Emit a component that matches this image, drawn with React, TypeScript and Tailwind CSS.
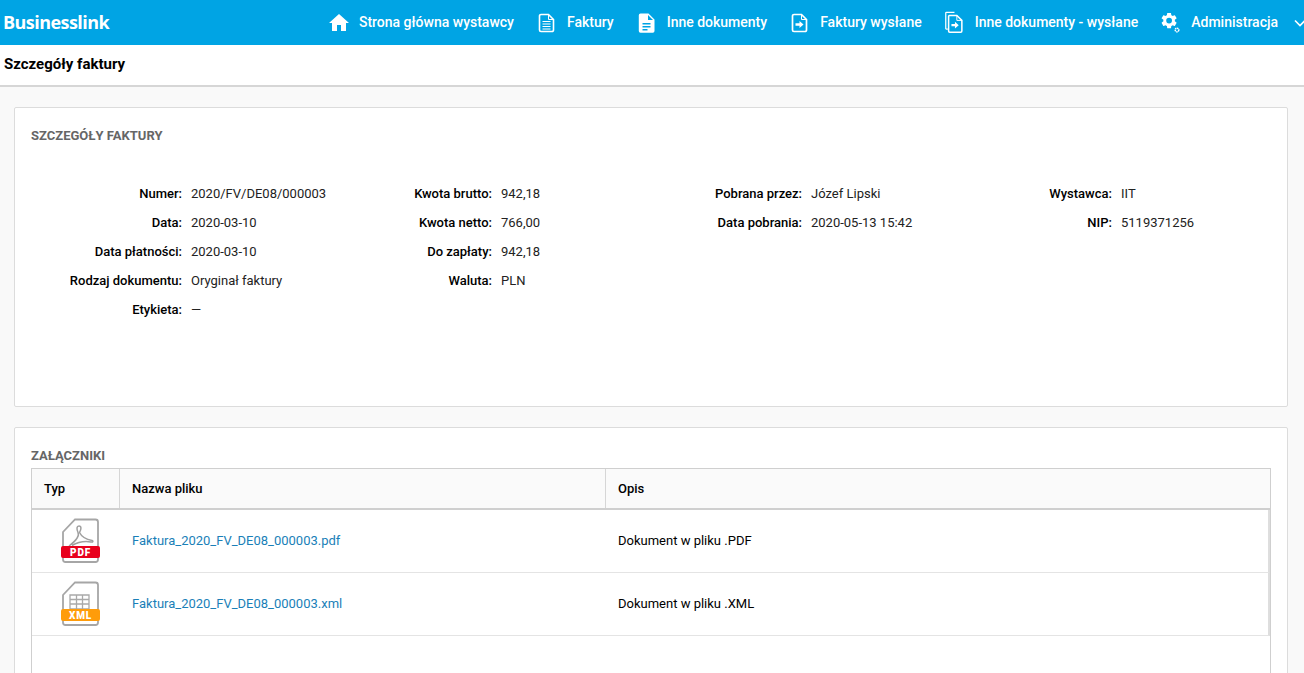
import React from "react";

const Home = () => (
  <svg width="24" height="24" viewBox="0 0 24 24" fill="#fff" className="w-[24px] h-[24px] -mx-[2px]"><path d="M10 20v-6h4v6h5v-8h3L12 3 2 12h3v8z" /></svg>
);
const DocLines = () => (
  <svg width="17" height="20" viewBox="0 0 17 20" fill="none" stroke="#fff">
    <path d="M1.500 3a1.500 1.500 0 0 1 1.500-1.500H10.500L15.500 6.500V17a1.500 1.500 0 0 1-1.500 1.500H3A1.500 1.500 0 0 1 1.500 17z" strokeWidth="1.600" />
    <path d="M10.500 1.500V6.500H15.500" strokeWidth="1" />
    <path d="M4.500 8.500H12.500M4.500 11H12.500M4.500 13.500H12.500M4.500 16H12.500" strokeWidth="1" />
  </svg>
);
const DocFilled = () => (
  <svg width="17" height="20" viewBox="0 0 17 20" fill="#fff">
    <path fillRule="evenodd" d="M2.500 0.500H10.500L16.500 6.500V18a1.700 1.700 0 0 1-1.700 1.700H2.500A1.700 1.700 0 0 1 .8 18V2.200A1.700 1.700 0 0 1 2.500.5zM10 2V7H15zM4.500 10V11.500H12.500V10zM4.500 13V14.500H12.500V13zM4.500 16V17.500H9.500V16z" />
  </svg>
);
const DocArrow = () => (
  <svg width="17" height="20" viewBox="0 0 17 20" fill="none">
    <path d="M1.500 3a1.500 1.500 0 0 1 1.500-1.500H10.500L15.500 6.500V17a1.500 1.500 0 0 1-1.500 1.500H3A1.500 1.500 0 0 1 1.500 17z" stroke="#fff" strokeWidth="1.700" />
    <path d="M10.500 1.500V6.500H15.500" stroke="#fff" strokeWidth="1" />
    <path d="M4.500 10.300H8.500V8L12.500 11.500L8.500 15V12.700H4.500z" fill="#fff" />
  </svg>
);
const DocsArrow = () => (
  <svg width="18" height="23" viewBox="0 0 19 23" fill="none">
    <path d="M3 18.500H1.500A.7.7 0 0 1 .8 17.800V1.500A.7.7 0 0 1 1.500.8H10" stroke="#fff" strokeWidth="1.300" />
    <path d="M3.800 5a1 1 0 0 1 1-1H12.500L17.800 9.300V20.500a1.200 1.200 0 0 1-1.200 1.200H5a1.200 1.200 0 0 1-1.200-1.200z" stroke="#fff" strokeWidth="1.600" />
    <path d="M12.500 4V9.300H17.800" stroke="#fff" strokeWidth="1" />
    <path d="M6.800 13H10.500V10.800L14.500 14.300L10.500 17.800V15.500H6.800z" fill="#fff" />
  </svg>
);
const Gears = () => (
  <svg width="19" height="20" viewBox="0 0 19 20" fill="#fff">
    <g transform="translate(-1.500 -2) scale(.8)">
      <path d="M19.140 12.940c.04-.3.060-.61.060-.94 0-.32-.02-.64-.07-.94l2.030-1.580a.49.49 0 0 0 .12-.61l-1.920-3.320a.49.49 0 0 0-.59-.22l-2.390.96c-.5-.38-1.030-.7-1.620-.94l-.36-2.540a.48.48 0 0 0-.48-.41h-3.840a.47.47 0 0 0-.47.41l-.36 2.540c-.59.240-1.130.570-1.620.94l-2.390-.96a.48.48 0 0 0-.59.22L2.740 8.870a.47.47 0 0 0 .12.610l2.030 1.580c-.05.3-.09.63-.09.94s.02.64.07.94l-2.030 1.580a.49.49 0 0 0-.12.610l1.920 3.320c.12.22.370.290.59.22l2.390-.96c.5.380 1.030.7 1.620.94l.36 2.540c.05.240.24.410.48.410h3.840c.24 0 .44-.17.470-.41l.36-2.540c.59-.24 1.130-.56 1.620-.94l2.390.96c.22.080.47 0 .59-.22l1.920-3.320a.47.47 0 0 0-.12-.61zM12 15.600a3.600 3.600 0 1 1 0-7.200 3.600 3.600 0 0 1 0 7.200z" />
    </g>
    <circle cx="16" cy="17" r="1.800" fill="none" stroke="#fff" strokeWidth="1.500" strokeDasharray="1.400 .5" />
  </svg>
);

const NavItem = ({ icon, label, gap }: { icon: React.ReactNode; label: string; gap: string }) => (
  <div className={`flex items-center ${gap}`}>
    {icon}
    <span className="text-[14px] font-medium text-white whitespace-nowrap">{label}</span>
  </div>
);

const Row = ({ label, value }: { label: string; value: string }) => (
  <div className="flex h-[29px] items-center text-[13px] leading-[29px]">
    <span className="w-[151px] shrink-0 text-right font-medium text-black">{label}</span>
    <span className="ml-[9px] text-[#222]">{value}</span>
  </div>
);

const Column = ({ rows }: { rows: [string, string][] }) => (
  <div>
    {rows.map(([l, v]) => (
      <Row key={l} label={l} value={v} />
    ))}
  </div>
);

const FileIcon = ({ color, label, kind }: { color: string; label: string; kind: "pdf" | "xml" }) => (
  <svg width="40" height="46" viewBox="0 0 40 46" fill="none">
    <path d="M2 14L14 1.500H34.500A2.500 2.500 0 0 1 37 4V41.500A2.500 2.500 0 0 1 34.500 44H4.500A2.500 2.500 0 0 1 2 41.500z" stroke="#a6a6a6" strokeWidth="1.800" fill="#fff" />
    {kind === "pdf" ? (
      <path d="M18 8c-2.500 0-2.500 3-1 6.500c2 4-3 9-9 13.500M18 8c2.500 0 2.500 3 .5 6.500c2 4 7 7 12.500 8c1.500 .5 1 2-1 1.500c-6-1-13 0-19 3.500" stroke="#a0a0a0" strokeWidth="1.500" />
    ) : (
      <path d="M9 14H28V28H9zM9 18.500H28M9 23H28M15.500 14V28M21.500 14V28" stroke="#a9a9a9" strokeWidth="1.300" />
    )}
    <rect x="0" y="28" width="39" height="12" rx="2" fill={color} />
    <text x="19.500" y="37.700" textAnchor="middle" fill="#fff" fontFamily="Roboto, sans-serif" fontWeight="900" fontSize="10" letterSpacing=".8">{label}</text>
  </svg>
);

const FileRow = ({ name, desc, color, label, kind }: { name: string; desc: string; color: string; label: string; kind: "pdf" | "xml" }) => (
  <div className="flex h-[63px] border-b border-b-[#e4e4e4] border-r-2 border-r-[#dedede] text-[13px]">
    <div className="w-[88px] shrink-0 flex items-center pl-[29px]">
      <FileIcon color={color} label={label} kind={kind} />
    </div>
    <div className="w-[486px] shrink-0 flex items-center pl-[12px] text-[#1a7fb8]">{name}</div>
    <div className="flex-1 flex items-center pl-[12px] text-black">{desc}</div>
  </div>
);

export default function App() {
  return (
    <div className="h-screen overflow-hidden bg-[#f9f9f9] font-['Roboto',sans-serif]">
      <header className="flex h-[45px] items-center bg-[#00a4e4] pl-[3px]">
        <span className="font-['Open_Sans',sans-serif] text-[18px] font-bold tracking-[-0.55px] text-white">Businesslink</span>
        <nav className="ml-auto flex items-center gap-[24px] -mr-[4px]">
          <NavItem icon={<Home />} label="Strona główna wystawcy" gap="gap-[10px]" />
          <NavItem icon={<DocLines />} label="Faktury" gap="gap-[12px]" />
          <NavItem icon={<DocFilled />} label="Inne dokumenty" gap="gap-[12px]" />
          <NavItem icon={<DocArrow />} label="Faktury wysłane" gap="gap-[12px]" />
          <div className="-ml-[1px]"><NavItem icon={<DocsArrow />} label="Inne dokumenty - wysłane" gap="gap-[12px]" /></div>
          <div className="-ml-[1px] flex items-center gap-[11px]">
            <Gears />
            <span className="text-[14px] font-medium text-white whitespace-nowrap">Administracja</span>
            <svg width="16" height="16" viewBox="0 0 16 16" fill="none" stroke="#fff" strokeWidth="1.600" className="ml-[3px]"><path d="M3 5.500L8 10.500L13 5.500" /></svg>
          </div>
        </nav>
      </header>

      <div className="flex h-[42px] items-center border-b-2 border-[#d6d6d6] bg-white pl-[4px] pb-[2px]">
        <h1 className="text-[15px] font-bold text-black">Szczegóły faktury</h1>
      </div>

      <main className="flex flex-col gap-[20px] pl-[14px] pr-[16px] pt-[20px]">
        <section className="h-[300px] rounded-[2px] border border-[#dcdcdc] bg-white px-[16px] pt-[20px]">
          <h2 className="text-[13px] leading-[16px] font-bold text-[#666]">SZCZEGÓŁY FAKTURY</h2>
          <div className="mt-[35px] grid grid-cols-4">
            <Column rows={[["Numer:", "2020/FV/DE08/000003"], ["Data:", "2020-03-10"], ["Data płatności:", "2020-03-10"], ["Rodzaj dokumentu:", "Oryginał faktury"], ["Etykieta:", "—"]]} />
            <Column rows={[["Kwota brutto:", "942,18"], ["Kwota netto:", "766,00"], ["Do zapłaty:", "942,18"], ["Waluta:", "PLN"]]} />
            <Column rows={[["Pobrana przez:", "Józef Lipski"], ["Data pobrania:", "2020-05-13 15:42"]]} />
            <Column rows={[["Wystawca:", "IIT"], ["NIP:", "5119371256"]]} />
          </div>
        </section>

        <section className="h-[400px] shrink-0 rounded-[2px] border border-[#dcdcdc] bg-white px-[16px] pt-[20px]">
          <h2 className="text-[13px] leading-[16px] font-bold text-[#666]">ZAŁĄCZNIKI</h2>
          <div className="mt-[4px] border border-b-0 border-[#cfcfcf] h-[300px]">
            <div className="flex h-[41px] border-b-2 border-[#cfcfcf] bg-[#fafafa] text-[13px] font-medium text-black">
              <div className="w-[88px] shrink-0 flex items-center border-r border-[#d6d6d6] pl-[12px]">Typ</div>
              <div className="w-[486px] shrink-0 flex items-center border-r border-[#d6d6d6] pl-[12px]">Nazwa pliku</div>
              <div className="flex-1 flex items-center pl-[12px]">Opis</div>
            </div>
            <FileRow name="Faktura_2020_FV_DE08_000003.pdf" desc="Dokument w pliku .PDF" color="#e8001c" label="PDF" kind="pdf" />
            <FileRow name="Faktura_2020_FV_DE08_000003.xml" desc="Dokument w pliku .XML" color="#ff9c0a" label="XML" kind="xml" />
          </div>
        </section>
      </main>
    </div>
  );
}
